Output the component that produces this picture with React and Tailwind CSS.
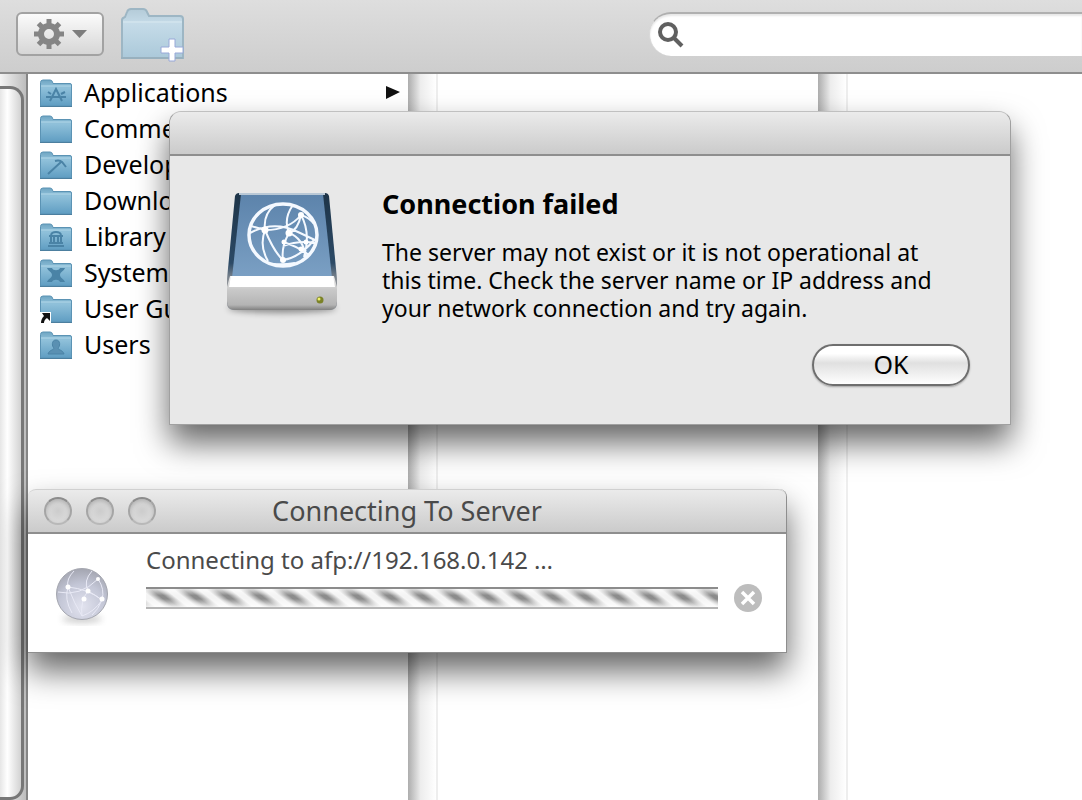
import React, { useState } from "react";

const items = [
  { name: "Applications", glyph: "apps", hasChildren: true },
  { name: "Comments" },
  { name: "Developer", glyph: "hammer" },
  { name: "Downloads" },
  { name: "Library", glyph: "library" },
  { name: "System", glyph: "system" },
  { name: "User Guides", glyph: "alias" },
  { name: "Users", glyph: "user" },
];

function FolderGlyph({ type }) {
  const line = { fill: "none", stroke: "#4a83a6", strokeWidth: 2 };
  switch (type) {
    case "apps":
      return <path {...line} d="M10 22l6-12 6 12M6 18h5m2 0h6m2 0h5M8 13l3 2M21 15l4-2" />;
    case "hammer":
      return <path {...line} d="M8 23l13-12M15 10c4-1 6 0 7 1l4 5" />;
    case "library":
      return (
        <path {...line} d="M8 23h16M9 20h14M11 14v6M14 14v6M18 14v6M21 14v6M9 13h14M11 12c1-4 9-4 10 0" />
      );
    case "system":
      return (
        <path fill="#4a83a6" d="M7 9h5c1 3 7 3 8 0h5c-1 3-5 4-5 7s4 4 5 7h-5c-1-3-7-3-8 0H7c1-3 5-4 5-7s-4-4-5-7z" />
      );
    case "user":
      return (
        <path fill="#5a90b2" stroke="#4a83a6" d="M16 9c5 0 4 7 2 8 0 2 5 2 6 6H8c1-4 6-4 6-6-2-1-3-8 2-8z" />
      );
    case "alias":
      return (
        <g>
          <path fill="#fff" d="M0 17h11v12H0z" />
          <path fill="#111" d="M2 18h8v8l-3-3c-2 1-3 3-3 5H1c0-3 1-5 3-7z" />
        </g>
      );
    default:
      return null;
  }
}

function Folder({ type }) {
  return (
    <svg width="32" height="28" viewBox="0 0 32 28" aria-hidden="true">
      <path
        d="M.5 27V3.500Q.5 1 3 1h7q2 0 2.500 2l.5 1.500h17q1.500 0 1.500 1.500v21z"
        fill="url(#folderFill)"
        stroke="#5b93b4"
      />
      <path d="M1 7h30" stroke="#b5d9ea" />
      <path d="M0 27.500h32" stroke="#4c7f9f" />
      <FolderGlyph type={type} />
    </svg>
  );
}

function Toolbar() {
  const [query, setQuery] = useState("");

  return (
    <header className="flex h-[74px] items-start justify-between border-b-2 border-[#8e8e8e] bg-linear-to-b from-[#dedede] to-[#cdcdcd]">
      <div className="flex items-start gap-4 pl-4">
        <button
          aria-label="Action"
          className="mt-3 flex h-11 w-22 items-center gap-2 rounded-md border-2 border-[#a2a2a2] bg-linear-to-b from-[#fbfbfb] to-[#d6d6d6] pl-4"
        >
          <svg width="30" height="30" viewBox="0 0 30 30" aria-hidden="true">
            <g stroke="#858585" strokeWidth="5">
              <path d="M15 0v8M15 22v8M0 15h8M22 15h8M4.500 4.500l5.500 5.500M20 20l5.500 5.500M25.500 4.500L20 10M10 20l-5.500 5.500" />
            </g>
            <circle cx="15" cy="15" r="8" fill="none" stroke="#858585" strokeWidth="6" />
          </svg>
          <svg width="15" height="8" viewBox="0 0 15 8" aria-hidden="true">
            <path d="M0 0h15L7.500 8z" fill="#7d7d7d" />
          </svg>
        </button>
        <button aria-label="New Folder" className="mt-2">
          <svg width="66" height="56" viewBox="0 0 66 56" aria-hidden="true">
            <path
              d="M2 50V12q0-2 3-3l2-5q1-3 4-3h12q3 0 4 3l2 4h31q3 0 3 3v39z"
              fill="url(#bigFolder)"
              stroke="#9db6c4"
              strokeWidth="2"
            />
            <path d="M3 14h59" stroke="#cfe2ec" strokeWidth="2" />
            <path d="M1 50h62" stroke="#98b0be" strokeWidth="2" />
            <path
              d="M49 31h6v8h8v6h-8v8h-6v-8h-8v-6h8z"
              fill="#fff"
              stroke="#98a8d8"
            />
          </svg>
        </button>
      </div>
      <label className="mt-3 flex h-11 w-2/5 items-center gap-2 rounded-l-full border-t-2 border-l border-t-[#b0b0b0] border-l-[#d8d8d8] bg-white pl-2 shadow-[inset_0_2px_2px_#e8e8e8]">
        <svg width="26" height="26" viewBox="0 0 26 26" aria-hidden="true">
          <circle cx="10" cy="10" r="8" fill="none" stroke="#606060" strokeWidth="4" />
          <path d="M16 16l8 8" stroke="#606060" strokeWidth="4" />
        </svg>
        <input
          type="search"
          aria-label="Search"
          value={query}
          onChange={(e) => setQuery(e.target.value)}
          className="min-w-0 flex-1 bg-transparent text-[25px] outline-none"
        />
      </label>
    </header>
  );
}

function ScrollTrack() {
  return (
    <div className="w-[30px] shrink-0 border-r-2 border-[#eeeeee] bg-linear-to-r from-[#adadad] via-[#ededed] via-45% to-white" />
  );
}

function Browser() {
  return (
    <main className="flex flex-1">
      <div className="flex w-7 shrink-0 flex-col border-r-2 border-[#858585] bg-linear-to-r from-[#f4f4f4] to-[#bdbdbd] pt-3">
        <div className="mr-[2px] flex-1 rounded-tr-[14px] rounded-br-[14px] border-t-3 border-r-3 border-b-3 border-[#777777] bg-linear-to-r from-[#e6e6e6] via-white via-35% to-[#d2d2d2]" />
      </div>
      <ul className="w-[380px] shrink-0 pt-px pr-2 pl-3">
        {items.map((item) => (
          <li key={item.name} className="flex h-9 items-center gap-3 text-[25px] text-black">
            <Folder type={item.glyph} />
            <span className="flex-1">{item.name}</span>
            {item.hasChildren && (
              <svg width="14" height="14" viewBox="0 0 14 14" aria-hidden="true">
                <path d="M0 0l14 6-14 7z" fill="#111" />
              </svg>
            )}
          </li>
        ))}
      </ul>
      <ScrollTrack />
      <div className="w-[380px] shrink-0" />
      <ScrollTrack />
    </main>
  );
}

function ServerDrive() {
  return (
    <svg width="120" height="130" viewBox="0 0 120 130" className="shrink-0" aria-hidden="true">
      <ellipse cx="60" cy="116" rx="54" ry="5" fill="#000" opacity=".4" filter="url(#soft)" />
      <path d="M13 4q1-3 4-3h86q3 0 4 3l8 83v24q0 7-7 7H12q-7 0-7-7V87z" fill="url(#driveEdge)" />
      <path d="M19 2h82l9 84H10z" fill="url(#driveTop)" />
      <path d="M17 2h86" stroke="#b9c8d6" strokeWidth="2" />
      <path d="M8 84h104l3 11v14q0 9-9 9H14q-9 0-9-9V95z" fill="url(#driveFront)" />
      <path d="M9 84h102l2 11H7z" fill="#fff" />
      <circle cx="98" cy="108" r="3.500" fill="#7b8228" />
      <circle cx="97" cy="107" r="1.500" fill="#eef06b" />
      <g fill="none" stroke="#f4f9ff" strokeWidth="2">
        <ellipse cx="61" cy="43" rx="34" ry="31" strokeWidth="3.500" />
        <path d="M29 34l14 4q24 0 36-15M43 38q-2-16 10-25M43 38q-6 16 3 31M43 38q9 22 18 30M28 41q24-13 48-1l19 9M67 41q-6-14 4-28M67 41q-8 14-6 27M67 41q14 5 17 24M67 41q9-3 12-18M79 23q10 18 3 42M79 23q9 3 13 9M61 54q16-6 33-3M61 50q14 4 26 13M61 68q16-2 31-20M51 72q10 1 22-1" />
      </g>
      <g fill="#fff">
        <circle cx="43" cy="38" r="3.500" />
        <circle cx="67" cy="41" r="3.500" />
        <circle cx="79" cy="23" r="3" />
        <circle cx="62" cy="50" r="2.500" />
        <circle cx="84" cy="50" r="2.500" />
        <circle cx="79" cy="57" r="2.500" />
        <circle cx="61" cy="68" r="3" />
      </g>
    </svg>
  );
}

function Globe() {
  return (
    <svg width="56" height="60" viewBox="0 0 56 60" className="shrink-0" aria-hidden="true">
      <ellipse cx="28" cy="53" rx="20" ry="4" fill="#777" opacity=".35" filter="url(#soft)" />
      <circle cx="28" cy="28" r="25.500" fill="url(#globeFill)" stroke="#a5a7b0" />
      <path
        d="M4 26q22 5 40-13M14 21q6 16 14 29M20 5q-8 8-6 16q-4 12 4 26M14 21q20 2 34 13M38 5q-9 10-4 20q-8 10-6 25M34 25q9 5 14 9M44 13q7 10 4 21q-4 10-10 15M28 50q12-4 20-16"
        fill="none"
        stroke="#e9eaf6"
        strokeWidth="1"
      />
      <g fill="#fff">
        <circle cx="14" cy="21" r="2.500" />
        <circle cx="34" cy="25" r="2.500" />
        <circle cx="30" cy="33" r="2.500" />
        <circle cx="48" cy="33" r="2.500" />
        <circle cx="44" cy="13" r="2" />
      </g>
    </svg>
  );
}

function AlertDialog() {
  return (
    <section
      role="alertdialog"
      aria-labelledby="alert-title"
      className="absolute top-[111px] left-[169px] w-[842px] rounded-t-xl border border-[#a0a0a0] border-t-[#c0c0c0] bg-[#e8e8e8] shadow-[0_18px_32px_rgba(0,0,0,0.6)]"
    >
      <div className="h-11 rounded-t-xl border-b-2 border-[#8e8e8e] bg-linear-to-b from-[#ebebeb] to-[#cbcbcb]" />
      <div className="flex items-start gap-10 px-10 pt-8 pb-[38px]">
        <div className="w-[132px] shrink-0 pt-1 pl-3">
          <ServerDrive />
        </div>
        <div className="flex flex-1 flex-col">
          <h1 id="alert-title" className="text-[27px] leading-8 font-bold text-black">
            Connection failed
          </h1>
          <p className="pt-[18px] pr-8 text-[23px] leading-7 text-black">
            The server may not exist or it is not operational at this time. Check the server name or IP
            address and your network connection and try again.
          </p>
          <button className="mt-[22px] flex h-[42px] w-[158px] items-center justify-center self-end rounded-full border-2 border-[#6e6e6e] bg-linear-to-b from-white from-20% via-[#e0e0e0] via-45% to-white text-[25px] text-black shadow-[0_1px_2px_rgba(0,0,0,0.3)]">
            OK
          </button>
        </div>
      </div>
    </section>
  );
}

function ConnectingWindow() {
  return (
    <section
      aria-labelledby="connect-title"
      className="absolute top-[489px] left-7 w-[759px] rounded-t-lg border-r border-b border-[#8e8e8e] bg-white shadow-[0_18px_32px_rgba(0,0,0,0.6)]"
    >
      <div className="relative flex h-[45px] items-center gap-[14px] rounded-t-lg border-t border-b-2 border-t-[#d0d0d0] border-b-[#8e8e8e] bg-linear-to-b from-[#ebebeb] to-[#cbcbcb] pl-4">
        {["Close", "Minimize", "Zoom"].map((label) => (
          <button
            key={label}
            aria-label={label}
            className="size-7 rounded-full border-2 border-[#a5a5a5] border-t-[#8c8c8c] border-b-[#b8b8b8] bg-radial from-[#cccccc] to-[#e2e2e2] shadow-[inset_0_2px_4px_#b0b0b0]"
          />
        ))}
        <h2 id="connect-title" className="pointer-events-none absolute inset-x-0 text-center text-[27px] text-[#4a4a4a]">
          Connecting To Server
        </h2>
      </div>
      <div className="flex h-[118px] items-start pt-3 pr-6 pl-[26px]">
        <div className="pt-5">
          <Globe />
        </div>
        <div className="flex-1 pl-9">
          <p id="connect-status" className="text-[24px] leading-7 text-[#4a4a4a]">
            Connecting to afp://192.168.0.142 …
          </p>
          <div className="flex items-center gap-4 pt-[10px]">
            <div
              role="progressbar"
              aria-labelledby="connect-status"
              className="h-[22px] flex-1 border-t-2 border-b-2 border-t-[#8c8c8c] border-b-[#b5b5b5] bg-[linear-gradient(to_bottom,rgba(255,255,255,0.7),rgba(255,255,255,0)_35%,rgba(255,255,255,0)_55%,rgba(255,255,255,0.85)),repeating-linear-gradient(38deg,#8c8c8c_0px,#f4f4f4_6px,#f4f4f4_11px,#8c8c8c_17px,#8c8c8c_20px)]"
            />
            <button aria-label="Cancel" className="flex size-7 items-center justify-center rounded-full bg-[#bdbdbd]">
              <svg width="16" height="16" viewBox="0 0 16 16" className="shrink-0" aria-hidden="true">
                <path d="M2 2l12 12M14 2L2 14" stroke="#fff" strokeWidth="3.500" />
              </svg>
            </button>
          </div>
        </div>
      </div>
    </section>
  );
}

export default function App() {
  return (
    <div className="relative flex min-h-screen flex-col overflow-hidden bg-white font-['Noto_Sans',sans-serif]">
      {/* shared gradients */}
      <svg width="0" height="0" className="absolute" aria-hidden="true">
        <defs>
          <linearGradient id="folderFill" x1="0" y1="0" x2="0" y2="1">
            <stop offset="0" stopColor="#6fa5c2" />
            <stop offset=".3" stopColor="#90c1da" />
            <stop offset="1" stopColor="#5f9dc2" />
          </linearGradient>
          <linearGradient id="bigFolder" x1="0" y1="0" x2="0" y2="1">
            <stop offset="0" stopColor="#b4cbd8" />
            <stop offset=".3" stopColor="#c5dbe8" />
            <stop offset="1" stopColor="#abc9da" />
          </linearGradient>
          <linearGradient id="driveTop" x1="0" y1="0" x2="0" y2="1">
            <stop offset="0" stopColor="#5c83ab" />
            <stop offset="1" stopColor="#7ba0c4" />
          </linearGradient>
          <linearGradient id="driveEdge" x1="0" y1="0" x2="0" y2="1">
            <stop offset="0" stopColor="#1d3448" />
            <stop offset=".6" stopColor="#2c4a66" />
            <stop offset=".75" stopColor="#8a8f95" />
          </linearGradient>
          <linearGradient id="driveFront" x1="0" y1="0" x2="0" y2="1">
            <stop offset="0" stopColor="#eeeeee" />
            <stop offset=".4" stopColor="#c9c9c9" />
            <stop offset=".85" stopColor="#b4b4b4" />
            <stop offset="1" stopColor="#808080" />
          </linearGradient>
          <radialGradient id="globeFill" cx=".5" cy=".75" r=".75">
            <stop offset="0" stopColor="#e2e3ef" />
            <stop offset=".6" stopColor="#c3c6d6" />
            <stop offset="1" stopColor="#a3a5b0" />
          </radialGradient>
          <filter id="soft" x="-20%" y="-100%" width="140%" height="300%">
            <feGaussianBlur stdDeviation="3" />
          </filter>
        </defs>
      </svg>
      <Toolbar />
      <Browser />
      <ConnectingWindow />
      <AlertDialog />
    </div>
  );
}
